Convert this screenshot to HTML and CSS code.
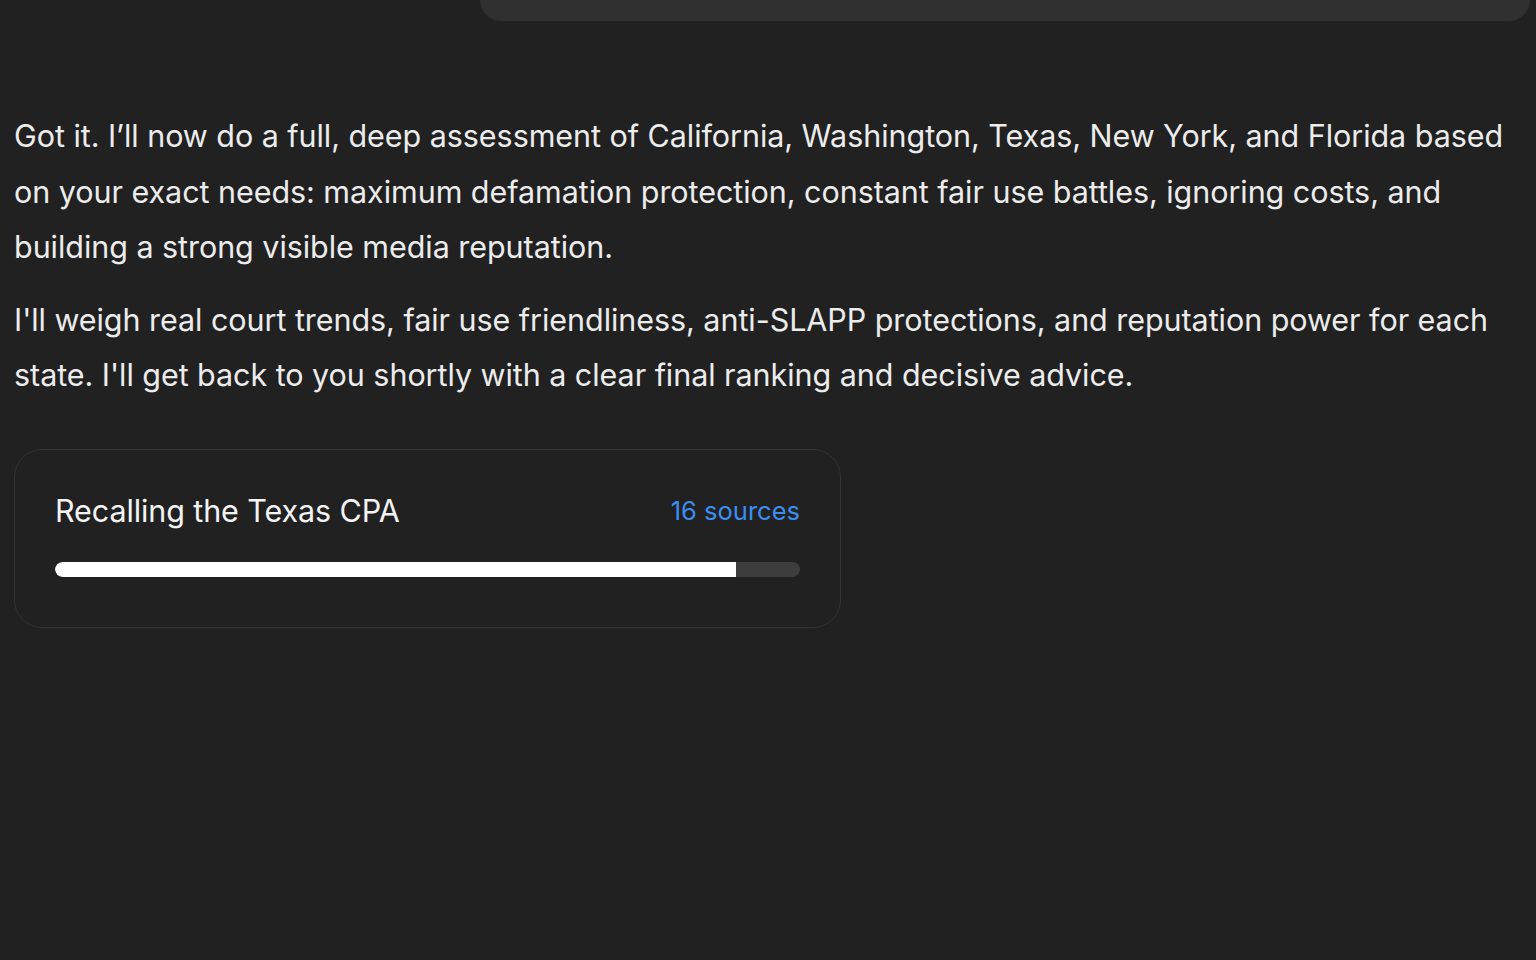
FILE: index.html
```html
<!DOCTYPE html>
<html>
  <head>
    <meta charset="utf-8" />
    <link rel="stylesheet" href="styles.css">
  </head>
  <body>
    <div class="page">
      <div class="top-bar">
        <div class="user-bubble"></div>
      </div>

      <div class="reply">
        <p>Got it. I’ll now do a full, deep assessment of California, Washington, Texas, New York, and Florida based on your exact needs: maximum defamation protection, constant fair use battles, ignoring costs, and building a strong visible media reputation.</p>
        <p>I'll weigh real court trends, fair use friendliness, anti-SLAPP protections, and reputation power for each state. I'll get back to you shortly with a clear final ranking and decisive advice.</p>
      </div>

      <div class="research-card">
        <div class="card-head">
          <span class="card-title">Recalling the Texas CPA</span>
          <span class="card-sources">16 sources</span>
        </div>
        <div class="progress">
          <div class="progress-fill" style="width: 91.4%"></div>
        </div>
      </div>
    </div>
  </body>
</html>
```

FILE: styles.css
```css
/* Page */
html, body {
  margin: 0;
  padding: 0;
  background-color: #212121;
}

body {
  font-family: Inter, "Noto Sans", "Liberation Sans", sans-serif;
  color: #ececec;
  width: 1536px;
  height: 960px;
  overflow: hidden;
}

.page {
  padding: 0 12px 0 14px;
}

/* Cut-off user message at the top */
.top-bar {
  display: flex;
  justify-content: flex-end;
}

.user-bubble {
  width: 1050px;
  height: 21px;
  margin-right: -6px;
  background-color: #303030;
  border-radius: 0 0 30px 30px;
}

/* Assistant reply */
.reply {
  margin-top: 87px;
  width: 1508px;
}

.reply p {
  margin: 0 0 17px 0;
  font-size: 30.5px;
  line-height: 55.5px;
  letter-spacing: -0.05px;
}

/* Research progress card */
.research-card {
  margin-top: 46px;
  width: 745px;
  padding: 40px 40px 50px 40px;
  border: 1px solid #343434;
  border-radius: 28px;
  background-color: #212121;
}

.card-head {
  display: flex;
  justify-content: space-between;
  align-items: center;
  height: 42px;
}

.card-title {
  font-size: 30.5px;
  letter-spacing: -0.1px;
  color: #f3f3f3;
}

.card-sources {
  font-size: 25.5px;
  color: #3b8ef0;
}

.progress {
  margin-top: 30px;
  height: 15px;
  border-radius: 8px;
  background-color: #3d3d3d;
  overflow: hidden;
}

.progress-fill {
  height: 100%;
  background-color: #ffffff;
  border-radius: 8px 0 0 8px;
}
```
